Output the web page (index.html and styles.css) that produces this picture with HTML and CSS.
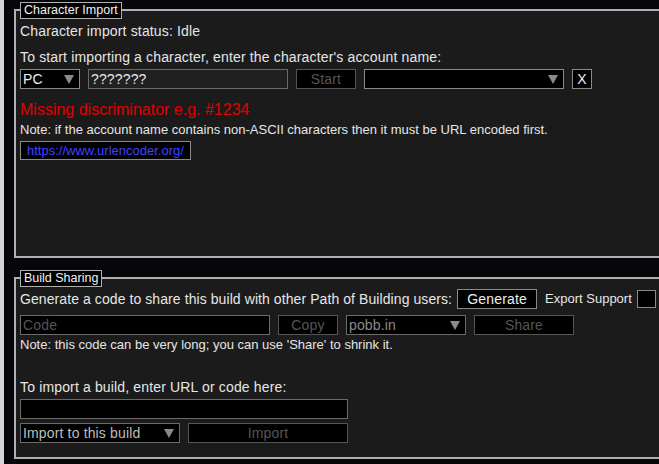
FILE: index.html
```html
<!DOCTYPE html>
<html>
<head>
<meta charset="utf-8">
<link rel="stylesheet" href="styles.css">
</head>
<body>
<div class="app">
  <section class="panel panel-char">
    <div class="legend">Character Import</div>
    <div class="line status">Character import status: Idle</div>
    <div class="line prompt">To start importing a character, enter the character's account name:</div>
    <div class="row row-account">
      <div class="select w60"><span class="sel-text">PC</span><span class="arrow"></span></div>
      <div class="input w200 filled">???????</div>
      <div class="btn w60 disabled">Start</div>
      <div class="select w200"><span class="sel-text"></span><span class="arrow"></span></div>
      <div class="btn w20">X</div>
    </div>
    <div class="error">Missing discriminator e.g. #1234</div>
    <div class="note note-ascii">Note: if the account name contains non-ASCII characters then it must be URL encoded first.</div>
    <div class="link-row"><div class="link-btn">https://www.urlencoder.org/</div></div>
  </section>

  <section class="panel panel-build">
    <div class="legend">Build Sharing</div>
    <div class="row row-generate">
      <span class="line gen-text">Generate a code to share this build with other Path of Building users:</span>
      <div class="btn w80">Generate</div>
      <span class="export-label">Export Support</span>
      <div class="checkbox"></div>
    </div>
    <div class="row row-code">
      <div class="input w250 placeholder">Code</div>
      <div class="btn w60 disabled">Copy</div>
      <div class="select w120 dim"><span class="sel-text">pobb.in</span><span class="arrow"></span></div>
      <div class="btn w100 disabled">Share</div>
    </div>
    <div class="note note-share">Note: this code can be very long; you can use 'Share' to shrink it.</div>
    <div class="line import-text">To import a build, enter URL or code here:</div>
    <div class="row row-import-input">
      <div class="input w328"></div>
    </div>
    <div class="row row-import">
      <div class="select w160 soft"><span class="sel-text">Import to this build</span><span class="arrow"></span></div>
      <div class="btn w160 disabled">Import</div>
    </div>
  </section>
</div>
</body>
</html>
```

FILE: styles.css
```css
html, body {
  margin: 0;
  padding: 0;
}
body {
  background: #05070a;
  border-left: 4px solid #d4d4d4;
  height: 464px;
  overflow: hidden;
  font-family: "Liberation Sans", Arial, sans-serif;
  color: #e6e6e6;
}
.app {
  padding: 9px 0 0 10px;
  display: flex;
  flex-direction: column;
}
.panel {
  position: relative;
  box-sizing: border-box;
  background: #1b1b1b;
  border: 2px solid #b0b0b0;
  border-right: none;
  padding: 12px 0 0 4px;
  display: flex;
  flex-direction: column;
  align-items: flex-start;
}
.panel-char { height: 249px; }
.panel-build {
  height: 182px;
  margin-top: 19px;
  padding-top: 10px;
}
.legend {
  position: absolute;
  left: 4px;
  top: -9px;
  box-sizing: border-box;
  height: 17px;
  line-height: 15px;
  padding: 0 3px;
  background: #000;
  border: 1px solid #b0b0b0;
  color: #f0f0f0;
  font-size: 12.5px;
}
.line {
  font-size: 14px;
  line-height: 16px;
  letter-spacing: 0.15px;
  white-space: nowrap;
}
.prompt { margin-top: 10px; }
.row {
  display: flex;
  align-items: center;
  gap: 8px;
}
.row-account { margin-top: 4px; }
.btn, .input, .select, .checkbox {
  box-sizing: border-box;
  height: 20px;
  background: #000;
  border: 1px solid #8a8a8a;
  font-size: 14px;
  line-height: 18px;
  letter-spacing: 0.15px;
  white-space: nowrap;
  overflow: hidden;
}
.btn {
  text-align: center;
  color: #eeeeee;
}
.btn.disabled {
  color: #555;
  border-color: #555;
}
.input {
  padding-left: 2px;
  color: #e6e6e6;
  border-color: #6a6a6a;
}
.input.filled {
  background: #202020;
  border-color: #6a6a6a;
}
.input.placeholder { color: #555; }
.select {
  display: flex;
  align-items: center;
  justify-content: space-between;
  padding: 0 5px 0 2px;
  color: #f0f0f0;
}
.select.dim { color: #8a8a8a; border-color: #6a6a6a; }
.select.soft { color: #bdbdbd; border-color: #6a6a6a; }
.arrow {
  width: 0;
  height: 0;
  border-left: 5px solid transparent;
  border-right: 5px solid transparent;
  border-top: 9px solid #8a8a8a;
}
.w20 { width: 20px; }
.w60 { width: 60px; }
.w80 { width: 80px; }
.w100 { width: 100px; }
.w120 { width: 120px; }
.w160 { width: 160px; }
.w200 { width: 200px; }
.w250 { width: 250px; }
.w328 { width: 328px; }
.error {
  margin-top: 12px;
  font-size: 16px;
  line-height: 18px;
  color: #e00000;
  white-space: nowrap;
}
.note {
  font-size: 13px;
  line-height: 15px;
  color: #e6e6e6;
  white-space: nowrap;
}
.note-ascii { margin-top: 3px; }
.link-row { margin-top: 4px; }
.link-btn {
  box-sizing: border-box;
  height: 19px;
  padding: 0 6px;
  line-height: 17px;
  font-size: 13px;
  background: #000;
  border: 1px solid #8a8a8a;
  color: #4040ff;
}
.row-generate { gap: 0; }
.gen-text {
  letter-spacing: 0.08px;
  margin-right: 5px;
}
.row-generate .btn { margin-right: 8px; }
.export-label {
  font-size: 13px;
  line-height: 16px;
  margin-right: 5px;
  white-space: nowrap;
}
.checkbox {
  width: 19px;
  height: 18px;
}
.row-code { margin-top: 6px; }
.note-share { margin-top: 2px; }
.import-text { margin-top: 27px; }
.row-import-input { margin-top: 4px; }
.row-import { margin-top: 4px; }
```
